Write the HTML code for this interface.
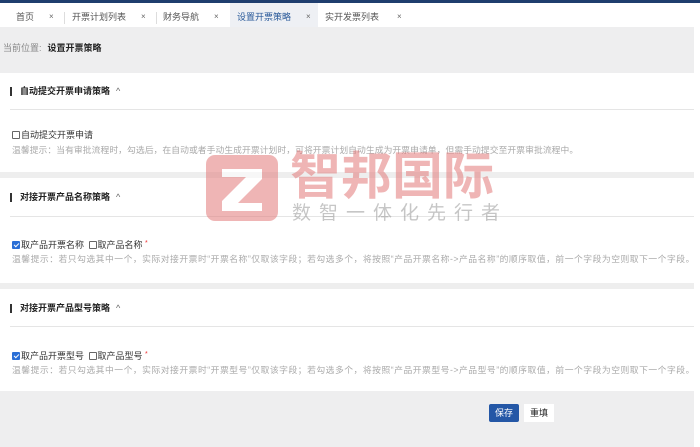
<!DOCTYPE html>
<html><head><meta charset="utf-8"><style>
*{margin:0;padding:0;box-sizing:border-box}
body{width:700px;height:447px;overflow:hidden;background:#fff;font-family:"Liberation Sans","Noto Sans CJK SC",sans-serif;font-size:9px;color:#333;position:relative}
.topbar{position:absolute;left:0;top:0;width:700px;height:3px;background:#1f3e6e}
.tabs{position:absolute;top:3px;left:0;width:700px;height:24px;background:#fff}
.tab{position:absolute;top:4px;height:20px;line-height:20px;font-size:9px;color:#555}
.x{position:absolute;top:4px;height:20px;line-height:20px;font-size:8px;color:#666}
.sep{position:absolute;top:9px;width:1px;height:12px;background:#ddd}
.gray{position:absolute;left:0;top:27px;width:694px;height:46px;background:#eeeeef}
.crumb{position:absolute;left:3px;top:41px;font-size:9px;color:#888}
.crumb b{color:#222;margin-left:6px}
.h{position:absolute;left:10px;font-size:9px;font-weight:bold;color:#222;padding-left:8px;border-left:2px solid #333;line-height:9px}
.h span{font-weight:normal;color:#666;margin-left:6px}
.line{position:absolute;left:10px;width:684px;height:1px;background:#e5e5e5}
.band{position:absolute;left:0;width:694px;height:6px;background:#eeeeee}
.cb{position:absolute;left:12px;font-size:9px;color:#333;line-height:10px}
.box{display:inline-block;width:8px;height:8px;border:1px solid #666;vertical-align:-1px;margin-right:1px;background:#fff;border-radius:1px}
.box.on{background:#2b6fd6;border-color:#2b6fd6;position:relative}
.box.on:after{content:"";position:absolute;left:2px;top:0px;width:2px;height:4px;border:solid #fff;border-width:0 1px 1px 0;transform:rotate(45deg)}
.req{color:#e33;font-size:7px;vertical-align:3px}
.hint{position:absolute;left:12px;font-size:8.8px;color:#aaa;white-space:nowrap}
.foot{position:absolute;left:0;top:391px;width:694px;height:56px;background:#eeeeef}
.btn{position:absolute;top:404px;height:18px;line-height:18px;font-size:9px;padding:0 6px}
.wm{position:absolute;opacity:.55}
</style></head><body>
<div class="topbar"></div>
<div class="tabs">
<div style="position:absolute;left:230px;top:0;width:88px;height:24px;background:#eef0f4"></div>
<div class="tab" style="left:16px">首页</div><div class="x" style="left:49px">×</div><div class="sep" style="left:64px"></div>
<div class="tab" style="left:72px">开票计划列表</div><div class="x" style="left:141px">×</div><div class="sep" style="left:156px"></div>
<div class="tab" style="left:163px">财务导航</div><div class="x" style="left:214px">×</div>
<div class="tab" style="left:237px;color:#2a5a9a">设置开票策略</div><div class="x" style="left:306px">×</div>
<div class="tab" style="left:325px">实开发票列表</div><div class="x" style="left:397px">×</div>
</div>
<div class="gray"></div>
<div class="crumb">当前位置:<b>设置开票策略</b></div>

<div class="h" style="top:87px">自动提交开票申请策略<span>^</span></div>
<div class="line" style="top:109px"></div>
<div class="cb" style="top:130px"><i class="box"></i>自动提交开票申请</div>
<div class="hint" style="top:143px;letter-spacing:0.05px">温馨提示：当有审批流程时，勾选后，在自动或者手动生成开票计划时，可将开票计划自动生成为开票申请单，但需手动提交至开票审批流程中。</div>
<div class="band" style="top:172px"></div>

<div class="h" style="top:193px">对接开票产品名称策略<span>^</span></div>
<div class="line" style="top:216px"></div>
<div class="cb" style="top:239px"><i class="box on"></i>取产品开票名称 <i class="box" style="margin-left:2px"></i>取产品名称 <span class="req">*</span></div>
<div class="hint" style="top:252px;letter-spacing:0.5px">温馨提示：若只勾选其中一个，实际对接开票时“开票名称”仅取该字段；若勾选多个，将按照“产品开票名称->产品名称”的顺序取值，前一个字段为空则取下一个字段。</div>
<div class="band" style="top:283px"></div>

<div class="h" style="top:304px">对接开票产品型号策略<span>^</span></div>
<div class="line" style="top:326px"></div>
<div class="cb" style="top:350px"><i class="box on"></i>取产品开票型号 <i class="box" style="margin-left:2px"></i>取产品型号 <span class="req">*</span></div>
<div class="hint" style="top:363px;letter-spacing:0.5px">温馨提示：若只勾选其中一个，实际对接开票时“开票型号”仅取该字段；若勾选多个，将按照“产品开票型号->产品型号”的顺序取值，前一个字段为空则取下一个字段。</div>

<div class="foot"></div>
<div class="btn" style="left:489px;background:#2457a6;color:#fff;border-radius:2px">保存</div>
<div class="btn" style="left:524px;background:#fff;color:#222">重填</div>

<div class="wm" style="left:206px;top:155px;width:72px;height:66px;background:#e27a7a;border-radius:9px">
<svg width="72" height="66" viewBox="0 0 72 66"><path d="M16 14H56V24L32 48H56V56H16V46L40 22H16Z" fill="#fff"/></svg></div>
<div class="wm" style="left:290px;top:140px;font-size:51px;line-height:64px;color:#e27a7a;font-weight:bold;font-family:'Noto Sans CJK SC',sans-serif">智邦国际</div>
<div class="wm" style="left:292px;top:201px;font-size:19px;line-height:22px;color:#999;letter-spacing:8px;font-family:'Noto Sans CJK SC',sans-serif">数智一体化先行者</div>
</body></html>
